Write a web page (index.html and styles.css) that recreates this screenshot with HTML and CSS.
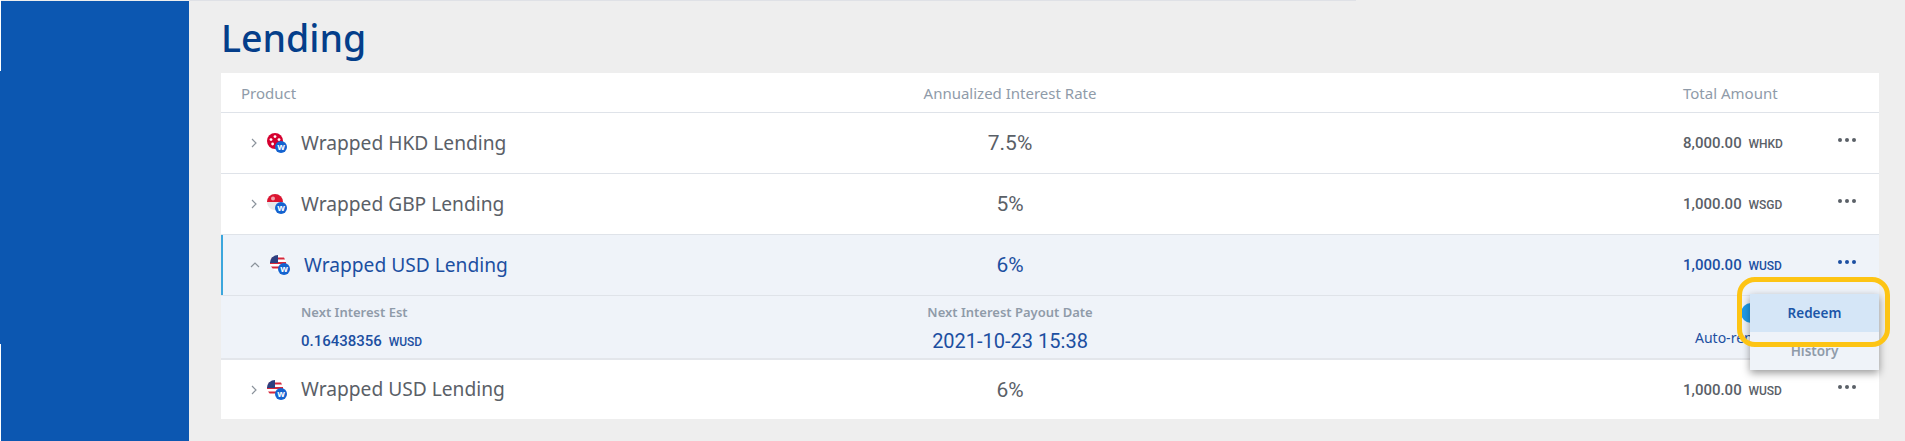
FILE: index.html
```html
<!DOCTYPE html>
<html lang="en">
<head>
  <meta charset="UTF-8" />
  <meta name="viewport" content="width=device-width, initial-scale=1.0"/>
  <title>Lending</title>
  <link rel="stylesheet" href="styles.css">
</head>
<body>

  <div class="shell">
    <div class="edge"></div>
    <div class="sidebar"></div>

    <div class="main">
      <div class="top-line"></div>
      <h1>Lending</h1>

      <div class="card">
        <div class="row head">
          <div class="col-name">Product</div>
          <div class="col-rate">Annualized Interest Rate</div>
          <div></div>
          <div>Total Amount</div>
          <div></div>
        </div>

        <div class="row item">
          <div class="col-name">
            <svg class="chev" viewBox="0 0 8 10"><path d="M2 1l4 4-4 4"/></svg>
            <svg class="coin" viewBox="0 0 20 20">
              <circle cx="8" cy="8" r="8" fill="#d5002f"/>
              <g fill="#fff"><circle cx="8" cy="3.6" r="1.4"/><circle cx="4" cy="6.6" r="1.4"/><circle cx="12" cy="6.6" r="1.4"/><circle cx="5.6" cy="11" r="1.4"/></g>
              <circle cx="14" cy="14" r="6" fill="#1463d0"/>
              <text x="14" y="16.8" class="coin-w">w</text>
            </svg>
            <span class="name">Wrapped HKD Lending</span>
          </div>
          <div class="col-rate rate">7.5%</div>
          <div></div>
          <div class="amount">8,000.00 <small>WHKD</small></div>
          <div class="dots"><i></i><i></i><i></i></div>
        </div>

        <div class="row item">
          <div class="col-name">
            <svg class="chev" viewBox="0 0 8 10"><path d="M2 1l4 4-4 4"/></svg>
            <svg class="coin" viewBox="0 0 20 20">
              <circle cx="8" cy="8" r="8" fill="#e8e8ea"/>
              <path d="M0 8a8 8 0 0 1 16 0z" fill="#dc1430"/>
              <circle cx="6" cy="4.6" r="2" fill="#fff" opacity=".6"/>
              <circle cx="14" cy="14" r="6" fill="#1463d0"/>
              <text x="14" y="16.8" class="coin-w">w</text>
            </svg>
            <span class="name">Wrapped GBP Lending</span>
          </div>
          <div class="col-rate rate">5%</div>
          <div></div>
          <div class="amount">1,000.00 <small>WSGD</small></div>
          <div class="dots"><i></i><i></i><i></i></div>
        </div>

        <div class="row item active">
          <div class="col-name">
            <svg class="chev" viewBox="0 0 10 8"><path d="M1 6l4-4 4 4"/></svg>
            <svg class="coin" viewBox="0 0 20 20">
              <circle cx="8" cy="8" r="8" fill="#fff"/>
              <path d="M2 2.6h12l1 2H1zM0 7h16v2H0zM1 11.4h14l-1.6 2H2.6z" fill="#d5283c"/>
              <path d="M8 0a8 8 0 0 0-8 8h8z" fill="#2c3f80"/>
              <circle cx="14" cy="14" r="6" fill="#1463d0"/>
              <text x="14" y="16.8" class="coin-w">w</text>
            </svg>
            <span class="name">Wrapped USD Lending</span>
          </div>
          <div class="col-rate rate">6%</div>
          <div></div>
          <div class="amount">1,000.00 <small>WUSD</small></div>
          <div class="dots"><i></i><i></i><i></i></div>
        </div>

        <div class="row detail">
          <div class="col-name">
            <div class="detail-label">Next Interest Est</div>
            <div class="detail-value">0.16438356 <small>WUSD</small></div>
          </div>
          <div class="col-rate">
            <div class="detail-label">Next Interest Payout Date</div>
            <div class="detail-date">2021-10-23 15:38</div>
          </div>
          <div></div>
          <div class="renew">
            <span class="toggle"></span>
            <span>Auto-renew</span>
          </div>
          <div></div>

          <div class="menu">
            <div class="menu-item on">Redeem</div>
            <div class="menu-item">History</div>
          </div>
          <div class="ring"></div>
        </div>

        <div class="row item last">
          <div class="col-name">
            <svg class="chev" viewBox="0 0 8 10"><path d="M2 1l4 4-4 4"/></svg>
            <svg class="coin" viewBox="0 0 20 20">
              <circle cx="8" cy="8" r="8" fill="#fff"/>
              <path d="M2 2.6h12l1 2H1zM0 7h16v2H0zM1 11.4h14l-1.6 2H2.6z" fill="#d5283c"/>
              <path d="M8 0a8 8 0 0 0-8 8h8z" fill="#2c3f80"/>
              <circle cx="14" cy="14" r="6" fill="#1463d0"/>
              <text x="14" y="16.8" class="coin-w">w</text>
            </svg>
            <span class="name">Wrapped USD Lending</span>
          </div>
          <div class="col-rate rate">6%</div>
          <div></div>
          <div class="amount">1,000.00 <small>WUSD</small></div>
          <div class="dots"><i></i><i></i><i></i></div>
        </div>
      </div>
    </div>
  </div>

</body>
</html>
```

FILE: styles.css
```css
* {
  box-sizing: border-box;
}
html, body {
  margin: 0;
  height: 100%;
  overflow: hidden;
}
body {
  font-family: "Noto Sans", sans-serif;
  background: #eeeeee;
  color: #5a6067;
}
.shell {
  display: flex;
  height: 441px;
}
.edge {
  width: 1px;
  background: linear-gradient(to bottom, #fff 71px, #0c57b1 71px, #0c57b1 344px, #fff 344px);
}
.sidebar {
  width: 188px;
  margin-top: 1px;
  background: #0c57b1;
}
.main {
  flex: 1;
  min-width: 0;
}
.top-line {
  width: 1167px;
  height: 1px;
  background: #dfe1e6;
}
h1 {
  margin: 0;
  padding: 11px 0 0 32px;
  height: 72px;
  font-size: 37.5px;
  line-height: 52px;
  font-weight: 500;
  color: #043e8a;
}
.card {
  margin-left: 32px;
  width: 1658px;
  background: #fff;
}
.row {
  display: grid;
  grid-template-columns: 580px 418px 464px 155px 41px;
  align-items: center;
}
.head {
  height: 40px;
  font-size: 15px;
  color: #8f9ba9;
  border-bottom: 1px solid #dfe3e9;
}
.col-name {
  padding-left: 20px;
  display: flex;
  align-items: center;
}
.col-rate {
  text-align: center;
}
.item {
  height: 61px;
  border-bottom: 1px solid #dfe3e9;
}
.item.last {
  height: 59px;
  border-bottom: none;
}
.chev {
  width: 8px;
  height: 10px;
  margin-left: 9px;
  fill: none;
  stroke: #8a929b;
  stroke-width: 1.2;
}
.coin {
  width: 20px;
  height: 20px;
  margin-left: 9px;
}
.coin-w {
  font-family: "Noto Sans", sans-serif;
  font-size: 9px;
  font-weight: 700;
  fill: #fff;
  text-anchor: middle;
}
.name {
  margin-left: 14px;
  padding-bottom: 2px;
  font-size: 19.2px;
}
.rate {
  font-family: Roboto, sans-serif;
  font-size: 21px;
}
.amount {
  font-family: Roboto, sans-serif;
  font-size: 15px;
  font-weight: 500;
}
small {
  font-size: 12px;
  margin-left: 3px;
}
.dots {
  display: flex;
  gap: 3px;
  margin-top: -6px;
}
.dots i {
  width: 4px;
  height: 4px;
  border-radius: 50%;
  background: #5a6067;
}
.active {
  background: #eff3f9;
  color: #1c4fa1;
  box-shadow: inset 2px 0 0 #3ba6dd;
}
.active .coin {
  margin-left: 10px;
}
.active .chev {
  width: 10px;
  height: 8px;
}
.active .dots i {
  background: #1c4fa1;
}
.detail {
  position: relative;
  height: 64px;
  align-items: start;
  background: #eff3f9;
  color: #1c4fa1;
  border-bottom: 2px solid #e3e6eb;
}
.detail .col-name {
  display: block;
  padding-left: 80px;
}
.detail-label {
  margin-top: 7px;
  font-size: 13px;
  font-weight: 600;
  color: #8f9ba9;
}
.detail-value {
  margin-top: 11px;
  font-family: Roboto, sans-serif;
  font-size: 15px;
  font-weight: 500;
}
.detail-date {
  margin-top: 8px;
  font-family: Roboto, sans-serif;
  font-size: 20px;
}
.renew {
  display: flex;
  flex-direction: column;
  align-items: flex-start;
  padding-left: 12px;
  font-size: 14px;
}
.toggle {
  width: 20px;
  height: 20px;
  margin: 7px 0 5px 46px;
  border-radius: 50%;
  background: #1e9be8;
}
.menu {
  position: absolute;
  top: -2px;
  right: 0;
  width: 129px;
  font-size: 13.5px;
  font-weight: 600;
  text-align: center;
  background: #eff3f9;
  box-shadow: 0 3px 8px rgba(0,0,0,0.4);
}
.menu-item {
  height: 38px;
  line-height: 38px;
  color: #8f9ba9;
}
.menu-item.on {
  background: #d5e6f7;
  color: #1c56a8;
}
.ring {
  position: absolute;
  top: -19px;
  right: -11px;
  width: 153px;
  height: 70px;
  border: 5px solid #fdc414;
  border-radius: 18px;
}
```
